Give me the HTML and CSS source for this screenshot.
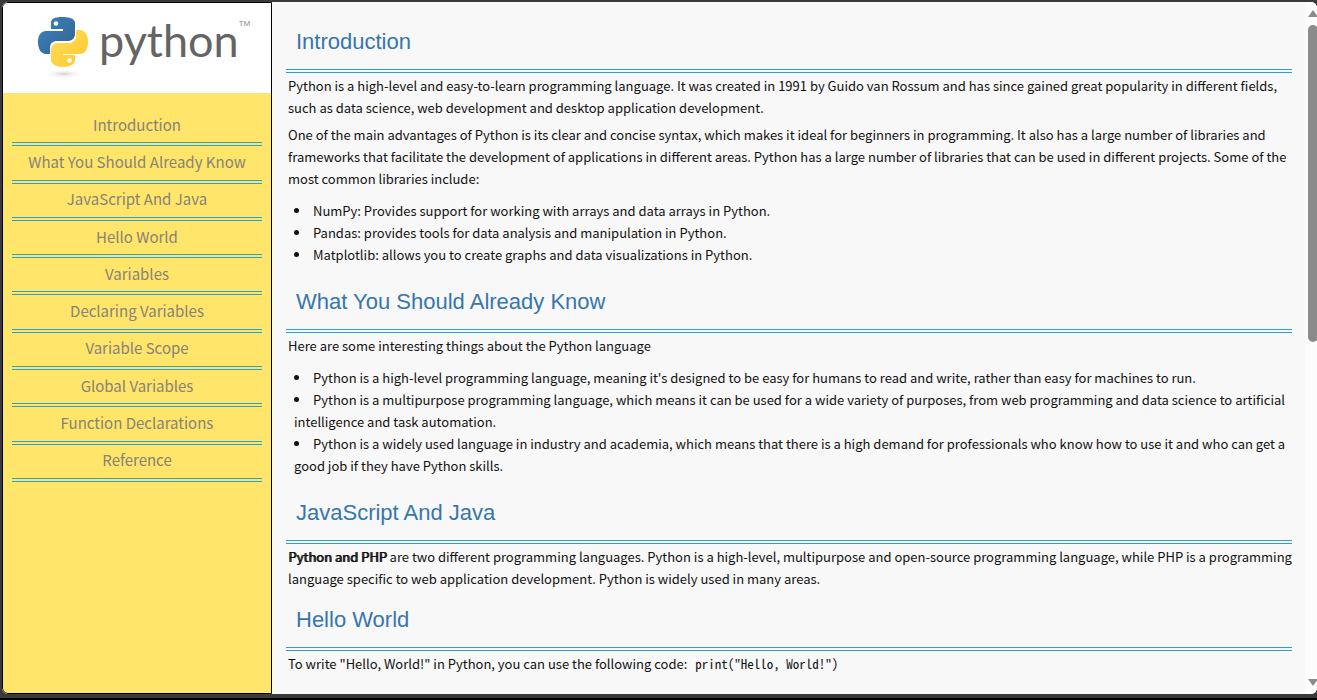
FILE: index.html
```
<!DOCTYPE html>
<html lang="en">
<head>
<meta charset="utf-8">
<title>Python Documentation</title>
<link rel="stylesheet" href="styles.css">
</head>
<body>
<div class="page">
  <nav class="sidebar" aria-label="Sections">
    <header class="logo">
      <svg class="logo-mark" viewBox="0 0 52 64" aria-hidden="true">
        <defs>
          <linearGradient id="blue" x1="0" y1="0" x2="1" y2="1"><stop offset="0" stop-color="#3b83bd"/><stop offset="1" stop-color="#33628f"/></linearGradient>
          <linearGradient id="gold" x1="0" y1="0" x2="1" y2="1"><stop offset="0" stop-color="#ffe05a"/><stop offset="1" stop-color="#ffc62e"/></linearGradient>
          <radialGradient id="shade"><stop offset="0" stop-color="#d4d4d4"/><stop offset="1" stop-color="#fff" stop-opacity="0"/></radialGradient>
        </defs>
        <ellipse cx="27" cy="58" rx="21" ry="5" fill="url(#shade)"/>
        <path fill="url(#blue)" d="M25 1C17 1 14 3 14 7v6h12v2H9C4 15 1 19 1 26s3 12 8 12h4v-6c0-5 3-7 7-7h11c4 0 7-3 7-7V7c0-4-5-6-13-6z"/>
        <circle cx="19" cy="7.5" r="2.3" fill="#fff"/>
        <path fill="url(#gold)" d="M39 14v6c0 4-3 7-7 7H21c-4 0-7 3-7 6v11c0 4 5 7 12 7s12-3 12-7v-5H26v-1h17c5 0 8-5 8-12s-3-12-8-12z"/>
        <circle cx="32.5" cy="44.5" r="2.3" fill="#fff"/>
      </svg>
      <span class="logo-word">python</span><span class="logo-tm">TM</span>
    </header>
    <ul class="menu">
      <li><a href="#introduction">Introduction</a></li>
      <li><a href="#what">What You Should Already Know</a></li>
      <li><a href="#java">JavaScript And Java</a></li>
      <li><a href="#hello">Hello World</a></li>
      <li><a href="#variables">Variables</a></li>
      <li><a href="#declaring">Declaring Variables</a></li>
      <li><a href="#scope">Variable Scope</a></li>
      <li><a href="#global">Global Variables</a></li>
      <li><a href="#functions">Function Declarations</a></li>
      <li><a href="#reference">Reference</a></li>
    </ul>
  </nav>
  <main class="doc">
    <section id="introduction">
      <h2>Introduction</h2>
      <p>Python is a high-level and easy-to-learn programming language. It was created in 1991 by Guido van Rossum and has since gained great popularity in different fields, such as data science, web development and desktop application development.</p>
      <p>One of the main advantages of Python is its clear and concise syntax, which makes it ideal for beginners in programming. It also has a large number of libraries and frameworks that facilitate the development of applications in different areas. Python has a large number of libraries that can be used in different projects. Some of the most common libraries include:</p>
      <ul>
        <li>NumPy: Provides support for working with arrays and data arrays in Python.</li>
        <li>Pandas: provides tools for data analysis and manipulation in Python.</li>
        <li>Matplotlib: allows you to create graphs and data visualizations in Python.</li>
      </ul>
    </section>
    <section id="what">
      <h2>What You Should Already Know</h2>
      <p>Here are some interesting things about the Python language</p>
      <ul>
        <li>Python is a high-level programming language, meaning it's designed to be easy for humans to read and write, rather than easy for machines to run.</li>
        <li>Python is a multipurpose programming language, which means it can be used for a wide variety of purposes, from web programming and data science to artificial intelligence and task automation.</li>
        <li>Python is a widely used language in industry and academia, which means that there is a high demand for professionals who know how to use it and who can get a good job if they have Python skills.</li>
      </ul>
    </section>
    <section id="java">
      <h2>JavaScript And Java</h2>
      <p><strong>Python and PHP</strong> are two different programming languages. Python is a high-level, multipurpose and open-source programming language, while PHP is a programming language specific to web application development. Python is widely used in many areas.</p>
    </section>
    <section id="hello">
      <h2>Hello World</h2>
      <p>To write "Hello, World!" in Python, you can use the following code: <code>print("Hello, World!")</code></p>
    </section>
  </main>
  <div class="scrollbar" aria-hidden="true">
    <svg class="arrow" viewBox="0 0 10 7"><path d="M5 0l5 7H0z"/></svg>
    <div class="track"><div class="thumb"></div></div>
    <svg class="arrow" viewBox="0 0 10 7"><path d="M0 0h10L5 7z"/></svg>
  </div>
</div>
</body>
</html>
```
FILE: styles.css
```
* {
  box-sizing: border-box;
}

body {
  margin: 0;
  height: 100vh;
  padding: 2px 0 4px 2px;
  border-bottom: 2px solid #000;
  background: #3a3a3a;
  color: #111;
  font: 13px/22px "Noto Sans CJK JP", sans-serif;
}

.page {
  display: flex;
  height: 100%;
  overflow: hidden;
  border-radius: 6px;
  background: #f8f8f8;
}

.sidebar {
  flex: 0 0 270px;
  border: 1px solid #000;
  border-radius: 6px 0 0 6px;
  background: #ffe569;
  overflow: hidden;
}

.logo {
  display: flex;
  align-items: flex-start;
  height: 90px;
  padding: 13px 0 0 34px;
  background: #fff;
}

.logo-mark {
  width: 52px;
  height: 64px;
}

.logo-word {
  margin-left: 10px;
  color: #646464;
  font: 45px/48px Lato, sans-serif;
}

.logo-tm {
  padding-top: 4px;
  color: #888;
  font: 8px/8px "Liberation Sans", sans-serif;
}

.menu {
  display: grid;
  grid-auto-rows: 1fr;
  min-height: 373px;
  margin: 16px 9px 0;
  padding: 0;
  list-style: none;
}

.menu li {
  display: flex;
  align-items: center;
  justify-content: center;
  padding-bottom: 2px;
  border-bottom: 4px double #2ca1cf;
}

.menu a {
  color: #868378;
  font-size: 15px;
  text-decoration: none;
}

.doc {
  flex: 1;
  min-width: 0;
  padding: 25px 13px 0 14px;
}

.doc h2 {
  margin: 0 0 2px;
  padding: 0 10px 12px;
  border-bottom: 4px double #2ca1cf;
  color: #3776ab;
  font: 22px/30px "Liberation Sans", Arial, sans-serif;
}

.doc p {
  margin: 0 0 5px 2px;
}

.doc section {
  padding-bottom: 10px;
}

.doc ul {
  margin: 10px 0 11px 8px;
  padding: 0;
  list-style-position: inside;
}

.doc strong {
  font-weight: 400;
  text-shadow: 1px 0 currentColor;
}

.doc code {
  padding-left: 5px;
  font: 13px/20px "Noto Sans Mono CJK JP", "Liberation Mono", monospace;
}

.scrollbar {
  display: flex;
  flex: 0 0 12px;
  flex-direction: column;
  padding: 8px 0 8px 3px;
  overflow: hidden;
  background: #fcfcfc;
}

.arrow {
  flex: none;
  width: 10px;
  height: 7px;
  fill: #8b8b8b;
}

.track {
  flex: 1;
  margin: 8px 0;
}

.thumb {
  width: 10px;
  height: 49%;
  border-radius: 5px;
  background: #8b8b8b;
}
```
